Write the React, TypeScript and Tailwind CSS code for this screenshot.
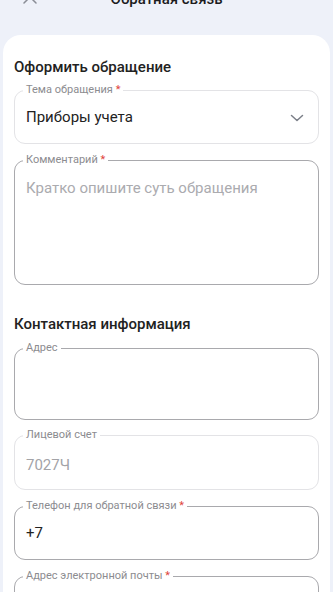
import React from "react";

const font = { fontFamily: "Roboto, 'Noto Sans', sans-serif" };

function Field({
  label,
  required,
  light,
  children,
  contentClass,
}: {
  label: string;
  required?: boolean;
  light?: boolean;
  children?: React.ReactNode;
  contentClass: string;
}) {
  return (
    <fieldset
      className={`rounded-[11px] border pl-[8px] pr-[10px] ${
        light ? "border-[#e3e3e6]" : "border-[#a9a9ad]"
      }`}
    >
      <legend className="px-[3px] text-[11px] leading-[12px] text-[#8c8c90]">
        {label}
        {required && <span className="text-[#e0443c]"> *</span>}
      </legend>
      <div className={`pl-[3px] ${contentClass}`}>{children}</div>
    </fieldset>
  );
}

export default function App() {
  return (
    <div className="flex h-[592px] w-[333px] flex-col overflow-hidden bg-[#eef1f9]" style={font}>
      <div className="relative flex h-[35px] shrink-0 flex-col">
        <svg width="14" height="14" viewBox="0 0 14 14" className="absolute left-[23px] top-[-10px]">
          <path d="M1 1 L13 13 M13 1 L1 13" stroke="#8a8d96" strokeWidth="1.5" strokeLinecap="round" />
        </svg>
        <div className="-mt-[11px] text-center text-[15px] font-medium leading-[20px] text-[#1c1c1e]">
          Обратная связь
        </div>
      </div>
      <div className="mx-[3px] h-[560px] rounded-t-[18px] bg-white px-[11px] pt-[22px]">
        <h2 className="text-[15px] font-medium leading-[20px] text-[#222]">Оформить обращение</h2>
        <div className="mt-[7px]">
          <Field label="Тема обращения" required light contentClass="flex items-center justify-between pt-[11px] pb-[16px]">
            <span className="text-[15px] leading-[20px] text-[#222]">Приборы учета</span>
            <svg width="14" height="8" viewBox="0 0 14 8" className="mr-[4px] mt-[2px]">
              <path d="M1.5 1.5 L7 6.5 L12.5 1.5" fill="none" stroke="#7b7f88" strokeWidth="1.5" strokeLinecap="round" strokeLinejoin="round" />
            </svg>
          </Field>
        </div>
        <div className="mt-[10px]">
          <Field label="Комментарий" required contentClass="h-[118px] pt-[10px]">
            <span className="text-[15px] leading-[20px] text-[#ababaf]">Кратко опишите суть обращения</span>
          </Field>
        </div>
        <h2 className="mt-[29px] text-[15px] font-medium leading-[20px] text-[#222]">Контактная информация</h2>
        <div className="mt-[8px]">
          <Field label="Адрес" contentClass="h-[65px]" />
        </div>
        <div className="mt-[9px]">
          <Field label="Лицевой счет" light contentClass="h-[48px] pt-[12px]">
            <span className="text-[15px] leading-[20px] text-[#a3a3a7]">7027Ч</span>
          </Field>
        </div>
        <div className="mt-[10px]">
          <Field label="Телефон для обратной связи" required contentClass="h-[47px] pt-[9px]">
            <span className="text-[15px] leading-[20px] text-[#222]">+7</span>
          </Field>
        </div>
        <div className="mt-[10px]">
          <Field label="Адрес электронной почты" required contentClass="h-[47px]" />
        </div>
      </div>
    </div>
  );
}
